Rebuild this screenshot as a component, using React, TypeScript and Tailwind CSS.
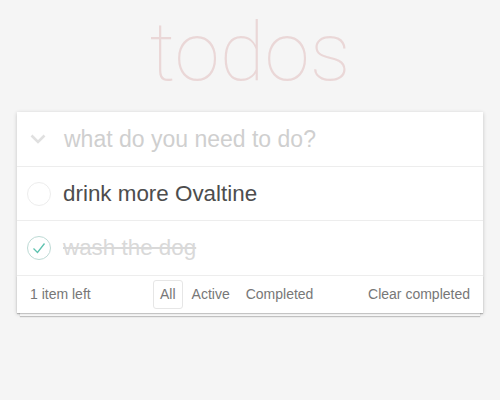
import React from 'react';

const todos = [
  { id: 1, title: 'drink more Ovaltine', completed: false },
  { id: 2, title: 'wash the dog', completed: true },
];

const Check = ({ done }: { done: boolean }) => (
  <svg width="26" height="26" viewBox="0 0 26 26" className="shrink-0">
    <circle cx="13" cy="13" r="11.5" fill="none" stroke={done ? '#bddad5' : '#ededed'} strokeWidth="1" />
    {done && <path d="M7.5 13.5 L11.5 17.5 L18.5 8.5" fill="none" stroke="#5dc2af" strokeWidth="1.3" />}
  </svg>
);

export default function App() {
  return (
    <div className="min-h-[400px] bg-[#f5f5f5] font-['Liberation_Sans',Arial,sans-serif] text-[#4d4d4d]">
      {/* Title */}
      <h1 className="h-[112px] pt-[2px] text-center font-['Roboto',sans-serif] text-[82px] font-thin leading-[100px] text-[rgba(175,47,47,0.15)]">
        todos
      </h1>

      <div className="relative mx-[17px] bg-white shadow-[0_1px_4px_rgba(0,0,0,0.2)]">
        {/* New todo */}
        <div className="flex h-[55px] items-center border-b border-[#ededed]">
          <svg width="16" height="10" viewBox="0 0 16 10" className="ml-[13px] mr-[18px]">
            <path d="M1.5 1.5 L8 8 L14.5 1.5" fill="none" stroke="#e0e0e0" strokeWidth="2.6" />
          </svg>
          <span className="text-[23px] font-light text-[#cfcfcf]">what do you need to do?</span>
        </div>

        {/* List */}
        {todos.map((todo, i) => (
          <div
            key={todo.id}
            className={`flex items-center gap-[11px] border-b border-[#ededed] pl-[9px] ${i === 0 ? 'h-[54px]' : 'h-[55px]'}`}
          >
            <Check done={todo.completed} />
            <span
              className={
                todo.completed
                  ? 'text-[22.4px] text-[#d9d9d9] line-through'
                  : 'text-[22.4px] text-[#4d4d4d]'
              }
            >
              {todo.title}
            </span>
          </div>
        ))}

        {/* Footer */}
        <div className="relative flex h-[37px] items-center px-[13px] text-[14px] text-[#777]">
          <div className="pointer-events-none absolute inset-x-0 bottom-0 h-[37px] shadow-[0_1px_1px_rgba(0,0,0,0.2),0_6px_0_-3px_#f6f6f6,0_7px_1px_-3px_rgba(0,0,0,0.2)]" />
          <span className="w-[123px]">1 item left</span>
          <div className="relative flex items-center gap-[2px]">
            <span className="rounded-[3px] border border-[#e6e6e6] px-[6px] py-[3px]">All</span>
            <span className="rounded-[3px] border border-transparent px-[6px] py-[3px]">Active</span>
            <span className="rounded-[3px] border border-transparent px-[6px] py-[3px]">Completed</span>
          </div>
          <span className="relative ml-auto">Clear completed</span>
        </div>
      </div>
    </div>
  );
}
